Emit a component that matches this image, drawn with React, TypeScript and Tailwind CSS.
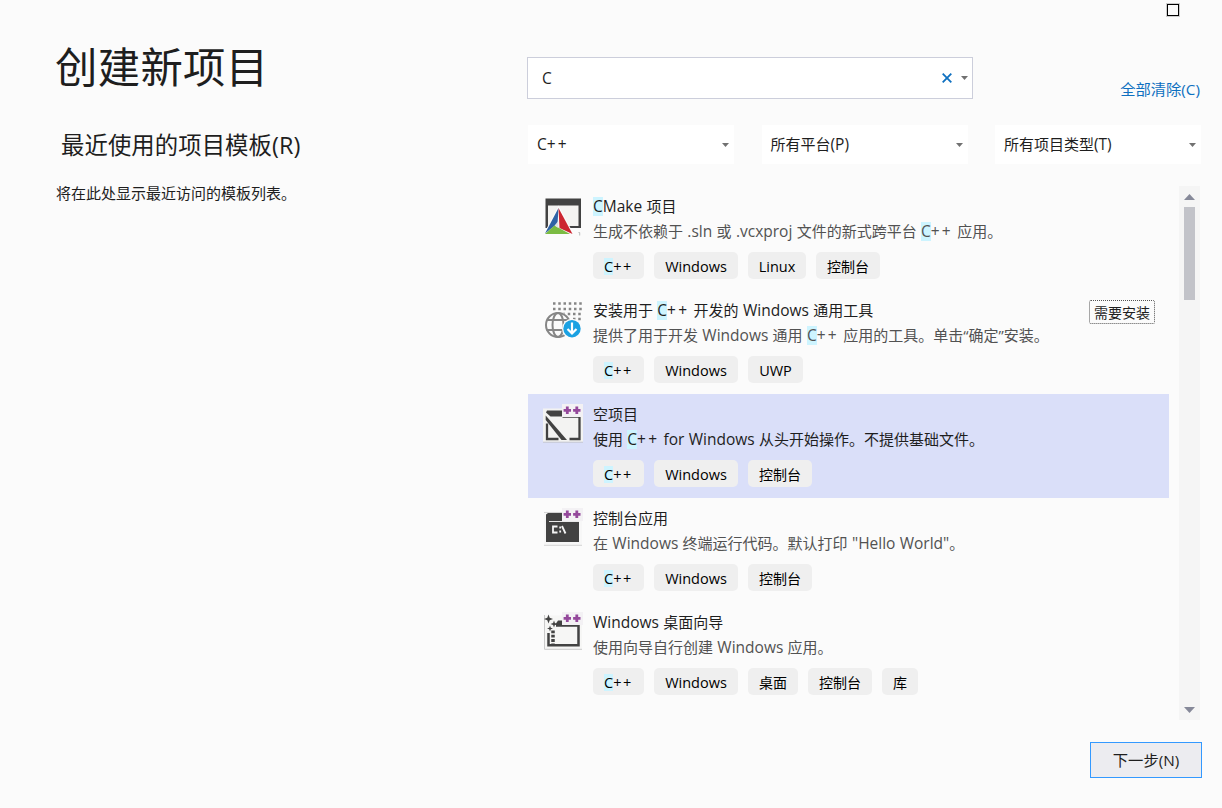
import React from "react";

type Template = {
  icon: React.ReactNode;
  title: string;
  desc: string;
  tags: string[];
  selected?: boolean;
  needsInstall?: boolean;
};

/** Splits mixed text into CJK, Latin and "C++" runs; "~" marks a highlighted C. */
function Rich({ text, small = false }: { text: string; small?: boolean }) {
  const parts = text.match(/~C|\+\+|[\x20-\x7d]+?(?=~C|\+\+|[^\x20-\x7e]|$)|[^\x20-\x7e]+/g) ?? [];
  return (
    <>
      {parts.map((p, i) => {
        if (p === "~C")
          return (
            <span
              key={i}
              className={
                small
                  ? "inline-block bg-[#cdf4ff] text-[14.5px] leading-[17px]"
                  : "inline-block bg-[#cdf4ff] text-[15.5px] leading-[19px]"
              }
            >
              C
            </span>
          );
        if (p === "++")
          return (
            <span key={i} className={small ? "text-[14.5px] tracking-[1.6px]" : "text-[15.5px] tracking-[2.2px]"}>
              ++
            </span>
          );
        if (/^[\x20-\x7e]/.test(p))
          return (
            <span key={i} className={small ? "text-[14.5px]" : "text-[15.5px] [word-spacing:0.3px]"}>
              {p}
            </span>
          );
        return <span key={i}>{p}</span>;
      })}
    </>
  );
}

function PlusPlus() {
  return (
    <>
      <path d="M19 0h21v13H19z" fill="#f3f1f4" />
      <path d="M24.3 2.6v7.400M20.600 6.3h7.400M33.800 2.6v7.400M30.100 6.3h7.400" stroke="#94489b" strokeWidth="2.8" />
    </>
  );
}

function Svg({ children }: { children: React.ReactNode }) {
  return (
    <svg className="h-11 w-10 shrink-0" viewBox="0 0 40 44" fill="none">
      {children}
    </svg>
  );
}

const cmakeIcon = (
  <Svg>
    <path d="M2.5 2.5H38V32H2.5z" fill="#424242" />
    <path d="M5 9.5h30.500V30H5z" fill="#f4f3f1" />
    <path d="M15.500 9.500 0 39.500h33L28 33z" fill="#fbfbfb" />
    <path d="M15.500 12 2 37.500l12.500-10z" fill="#2f62a5" />
    <path d="M15.500 12 29.500 38 16.500 32z" fill="#cc2530" />
    <path d="M2 38l9.500-8.500L27 38z" fill="#7bbb43" />
    <path d="M15.300 25v7l-3.700-2.500z" fill="#dfe2e5" />
    <path d="M35.500 36.500h1.200v3" stroke="#bbb" />
  </Svg>
);

const installIcon = (
  <Svg>
    <path
      d="M10 3.500h29M10 9h29M19.500 14h19M30 19h9"
      stroke="#868686"
      strokeWidth="2.500"
      strokeDasharray="2.500 2.750"
    />
    <circle cx="15" cy="25" r="13.300" fill="#fbfbfb" />
    <g stroke="#868686" strokeWidth="2">
      <circle cx="15" cy="25" r="12" />
      <ellipse cx="15" cy="25" rx="5.500" ry="12" />
      <path d="M4 20h22M3.500 30h22" />
    </g>
    <circle cx="29" cy="28.700" r="10" fill="#fbfbfb" />
    <circle cx="29" cy="28.700" r="8.700" fill="#1ba1e2" />
    <path d="M29 22.500v10.500M24.500 29l4.500 4.500 4.500-4.500" stroke="#fff" strokeWidth="2.200" />
  </Svg>
);

const emptyIcon = (
  <Svg>
    <path d="M0 4.500h40V38H0z" fill="#f3f3f2" />
    <path d="M0 38.200h40" stroke="#c3c5cf" />
    <path d="M4 6.500h15.500v6H7.500L3 8.500z" fill="#424242" />
    <path d="M19.500 12.500h17V35h-10M4 19.500v15.500h11.500" stroke="#424242" strokeWidth="2.300" />
    <path d="M2.700 11.500v4.500L18.500 36H24z" fill="#424242" />
    <PlusPlus />
  </Svg>
);

const consoleIcon = (
  <Svg>
    <path d="M1 3.500h38v33.800H1z" fill="#f7f7f7" />
    <path d="M1 37.300h38M1 4.500h18" stroke="#d4d4d4" />
    <path d="M3 6.500 5 5h14v8h17v21H3z" fill="#424242" />
    <path d="M6 13.500h30" stroke="#e9e9e9" />
    <path d="M14.500 18.500h-4.500v6h4.500M17.200 18.500v2M17.200 22.500v2M19 18l3.500 7.500" stroke="#f5f5f5" strokeWidth="1.800" />
    <PlusPlus />
  </Svg>
);

const wizardIcon = (
  <Svg>
    <path d="M1 3.500h38v33.800H1z" fill="#f6f6f5" />
    <path d="M1.500 3v34.300H39" stroke="#cacaca" />
    <path d="M12 13 15 8.500h5l3 4.500z" fill="#424242" />
    <path d="M13 13.500h22.500v19.800H5.500V21" stroke="#424242" strokeWidth="2.500" />
    <path d="M10 18.500v14" stroke="#424242" strokeWidth="3.500" strokeDasharray="2.800 1.500" />
    <g fill="#424242">
      <path d="m5.500 2.500 1.200 3.300L10 7 6.700 8.200 5.500 11.500 4.300 8.200 1 7l3.300-1.200z" />
      <path d="m11 8.500.900 2.600 2.600.900-2.600.900-.900 2.600-.900-2.600-2.600-.900 2.600-.900z" />
      <path d="m7 13.500.800 2.200 2.200.800-2.200.800L7 19.500l-.800-2.200-2.200-.800 2.200-.800z" />
    </g>
    <PlusPlus />
  </Svg>
);

const templates: Template[] = [
  {
    icon: cmakeIcon,
    title: "~CMake 项目",
    desc: "生成不依赖于 .sln 或 .vcxproj 文件的新式跨平台 ~C++ 应用。",
    tags: ["~C++", "Windows", "Linux", "控制台"],
  },
  {
    icon: installIcon,
    title: "安装用于 ~C++ 开发的 Windows 通用工具",
    desc: "提供了用于开发 Windows 通用 ~C++ 应用的工具。单击“确定”安装。",
    tags: ["~C++", "Windows", "UWP"],
    needsInstall: true,
  },
  {
    icon: emptyIcon,
    title: "空项目",
    desc: "使用 ~C++ for Windows 从头开始操作。不提供基础文件。",
    tags: ["~C++", "Windows", "控制台"],
    selected: true,
  },
  {
    icon: consoleIcon,
    title: "控制台应用",
    desc: '在 Windows 终端运行代码。默认打印 "Hello World"。',
    tags: ["~C++", "Windows", "控制台"],
  },
  {
    icon: wizardIcon,
    title: "Windows 桌面向导",
    desc: "使用向导自行创建 Windows 应用。",
    tags: ["~C++", "Windows", "桌面", "控制台", "库"],
  },
];

const tagWidths: Record<string, string> = {
  "~C++": "w-[51px]",
  Windows: "w-[84px]",
  Linux: "w-[58px]",
  UWP: "w-[55px]",
  控制台: "w-16",
  桌面: "w-[50px]",
  库: "w-9",
};

function Arrow() {
  return (
    <svg className="h-1 w-[7px]" viewBox="0 0 7 4">
      <path d="M0 0h7L3.500 4z" fill="#717171" />
    </svg>
  );
}

function Row({ t }: { t: Template }) {
  return (
    <div className={`flex h-[104px] w-[641px] pt-[10px] pl-[15px] ${t.selected ? "bg-[#dadff9]" : ""}`}>
      {t.icon}
      <div className="ml-[10px] flex-1 whitespace-nowrap">
        <div className="flex h-[21px] justify-between text-[15px] leading-[21px] text-[#1e1e1e]">
          <div>
            <Rich text={t.title} />
          </div>
          {t.needsInstall && (
            <div className="mr-[14px] flex h-6 w-[66px] items-center justify-center rounded-[2px] border border-dotted border-[#555] pt-px text-[14px] leading-5">
              需要安装
            </div>
          )}
        </div>
        <div
          className={`mt-1 h-[21px] text-[15px] leading-[21px] ${t.selected ? "text-[#1e1e1e]" : "text-[#525252]"}`}
        >
          <Rich text={t.desc} />
        </div>
        <div className="mt-[10px] flex gap-[10px] text-[14px] text-black">
          {t.tags.map((tag) => (
            <div
              key={tag}
              className={`flex h-[27px] items-center justify-center rounded-[5px] bg-[#efefef] pt-[2px] leading-[20px] ${tagWidths[tag]}`}
            >
              <span>
                <Rich text={tag} small />
              </span>
            </div>
          ))}
        </div>
      </div>
    </div>
  );
}

function Select({ label }: { label: string }) {
  return (
    <div className="flex h-[39px] w-[206px] items-center justify-between bg-white pr-[5px] pl-[9px] text-[15px]">
      <span>
        <Rich text={label} />
      </span>
      <Arrow />
    </div>
  );
}

export default function App() {
  return (
    <div className="flex h-[808px] w-[1222px] overflow-hidden bg-[#fbfbfb] font-['Open_Sans','Noto_Sans_CJK_SC',sans-serif] text-[#1e1e1e]">
      <aside className="w-[527px] shrink-0 pt-[37px] pl-[55px]">
        <h1 className="h-[60px] text-[42.4px] leading-[60px] tracking-[0.3px]">创建新项目</h1>
        <h2 className="mt-[31px] ml-[6px] h-[34px] text-[23.4px] leading-[34px] tracking-[0.05px]">
          最近使用的项目模板(R)
        </h2>
        <p className="mt-[20px] ml-px text-[15px] leading-[22px]">将在此处显示最近访问的模板列表。</p>
      </aside>

      <main className="flex w-[675px] flex-col">
        <div className="flex h-[57px] justify-end pt-1 pr-[23px]">
          <div className="h-3 w-3 border border-black outline outline-[#cccccc]" />
        </div>

        <div className="flex h-[42px] justify-between">
          <div className="flex h-[42px] w-[446px] items-center border border-[#cccedb] bg-white pr-1 pl-[14px]">
            <span className="flex-1 pt-[2px] text-[15.5px]">C</span>
            <svg className="mr-[9px] h-[10px] w-[10px]" viewBox="0 0 10 10">
              <path d="M.700.700l8.600 8.600M9.300.700.700 9.300" stroke="#0e70c0" strokeWidth="1.800" />
            </svg>
            <Arrow />
          </div>
          <a className="mt-[21px] mr-[2px] text-[15.3px] leading-[22px] text-[#0e70c0]">全部清除(C)</a>
        </div>

        <div className="mt-[26px] ml-px flex w-[673px] justify-between">
          <Select label="C++" />
          <Select label="所有平台(P)" />
          <Select label="所有项目类型(T)" />
        </div>

        <div className="mt-[22px] ml-px flex h-[534px]">
          <div className="w-[641px] overflow-hidden">
            {templates.map((t) => (
              <Row key={t.title} t={t} />
            ))}
          </div>
          <div className="ml-[10px] flex w-[21px] flex-col items-center bg-[#f5f5f5]">
            <svg className="mt-2 h-[6px] w-[11px] shrink-0" viewBox="0 0 11 6">
              <path d="M0 6h11L5.500 0z" fill="#868999" />
            </svg>
            <div className="mt-[7px] h-[93px] w-[11px] shrink-0 bg-[#c2c3c9]" />
            <svg className="mt-auto mb-[7px] h-[6px] w-[11px] shrink-0" viewBox="0 0 11 6">
              <path d="M0 0h11L5.500 6z" fill="#868999" />
            </svg>
          </div>
        </div>

        <button className="mt-[22px] h-9 w-28 self-end border border-[#3399ff] bg-[#ececf0] text-[15.3px] leading-[32px]">
          下一步(N)
        </button>
      </main>
    </div>
  );
}
